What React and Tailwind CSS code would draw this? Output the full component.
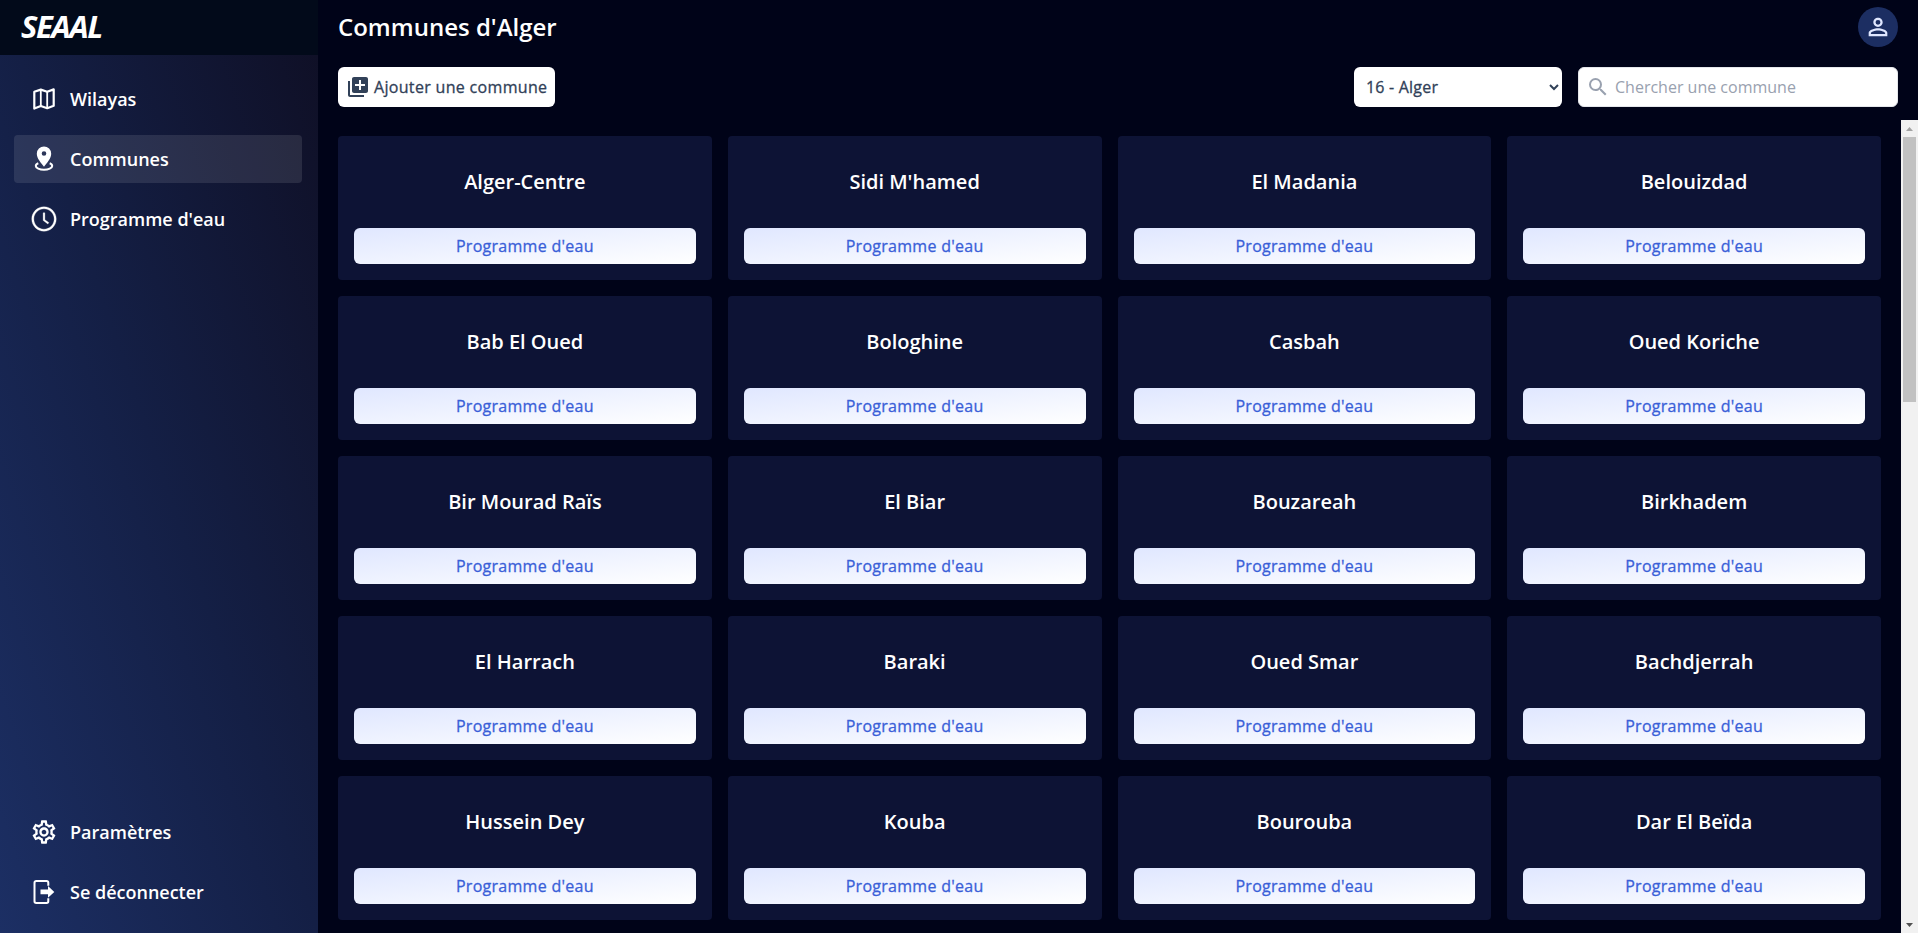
import React from 'react';
import { MdLibraryAdd, MdSearch, MdPersonOutline, MdOutlineSettings } from 'react-icons/md';
import { AiOutlineClockCircle } from 'react-icons/ai';

const communes = [
  'Alger-Centre', "Sidi M'hamed", 'El Madania', 'Belouizdad',
  'Bab El Oued', 'Bologhine', 'Casbah', 'Oued Koriche',
  'Bir Mourad Raïs', 'El Biar', 'Bouzareah', 'Birkhadem',
  'El Harrach', 'Baraki', 'Oued Smar', 'Bachdjerrah',
  'Hussein Dey', 'Kouba', 'Bourouba', 'Dar El Beïda',
];

function MapIcon() {
  return (
    <svg width="28" height="28" viewBox="0 0 28 28" fill="none" stroke="currentColor" strokeLinejoin="round">
      <path strokeWidth="2.2" d="M4.3 6.800 10.800 4.600 17.200 6.800 23.700 4.400V20.800L17.200 23.200 10.800 21 4.300 23.500Z" />
      <path strokeWidth="1.8" d="M10.800 4.600V21M17.200 6.800V23.200" />
    </svg>
  );
}

function PinIcon() {
  return (
    <svg width="28" height="28" viewBox="0 0 28 28" fill="none">
      <path fill="currentColor" fillRule="evenodd" d="M14 1.500a7.200 7.200 0 0 0-7.200 7.200c0 4.600 4.300 9.300 7.200 13 2.900-3.700 7.200-8.400 7.200-13A7.200 7.200 0 0 0 14 1.500Zm0 4.700a2.300 2.300 0 1 1 0 4.600 2.300 2.300 0 0 1 0-4.600Z" />
      <path stroke="currentColor" strokeWidth="2" d="M8.300 18.300C6.700 18.900 5.800 19.900 5.800 21c0 2 3.700 3.700 8.200 3.700s8.200-1.700 8.200-3.700c0-1.100-.9-2.100-2.500-2.700" />
    </svg>
  );
}

function LogoutIcon() {
  return (
    <svg width="28" height="28" viewBox="0 0 28 28" fill="none">
      <path stroke="currentColor" strokeWidth="2" d="M18.300 7.700V4.700a1.700 1.700 0 0 0-1.700-1.700H6.200A1.700 1.700 0 0 0 4.500 4.700v18.600A1.700 1.700 0 0 0 6.200 25h10.400a1.700 1.700 0 0 0 1.700-1.700v-3" />
      <path fill="currentColor" d="M10.500 11.500h7.500V8l6.300 5.900-6.300 5.900v-3.500h-7.500z" />
    </svg>
  );
}

function NavItem({ icon, label, active }) {
  return (
    <a className={`flex h-12 items-center gap-3 rounded px-4 text-lg font-semibold text-white ${active ? 'bg-white/10' : ''}`}>
      {icon}
      <span>{label}</span>
    </a>
  );
}

function CommuneCard({ name }) {
  return (
    <div className="flex h-36 flex-col justify-between rounded bg-[#0d1335] p-4">
      <h2 className="mt-4 text-center text-xl font-semibold text-white">{name}</h2>
      <button className="h-9 w-full rounded-md bg-gradient-to-br from-indigo-100 to-white font-medium tracking-[0.28px] text-[#3a5fd8] [-webkit-text-stroke:0.3px]">
        Programme d'eau
      </button>
    </div>
  );
}

function ScrollBar() {
  return (
    <div className="flex w-[17px] shrink-0 flex-col items-center bg-[#f1f1f1]">
      <svg width="17" height="17" viewBox="0 0 17 17"><path fill="#a3a3a3" d="M5 11h7L8.500 7z" /></svg>
      <div className="h-[265px] w-[13px] bg-[#c1c1c1]" />
      <svg className="mt-auto" width="17" height="17" viewBox="0 0 17 17"><path fill="#505050" d="M5 7h7l-3.500 4z" /></svg>
    </div>
  );
}

export default function App() {
  return (
    <div className="flex h-[933px] w-full overflow-hidden bg-[#000318] font-['Open_Sans',sans-serif]">
      <aside className="flex w-[318px] shrink-0 flex-col bg-linear-to-tr/srgb from-[#1c2f64] via-[#141f45] to-[#0f0f25]">
        <div className="flex h-[55px] items-center bg-[#020a1a] pl-[21px]">
          <span className="-mt-0.5 text-[31px] font-bold italic tracking-[-1.5px] text-white">SEAAL</span>
        </div>
        <nav className="flex flex-1 flex-col gap-3 pt-5 pr-4 pb-[17px] pl-3.5">
          <NavItem icon={<MapIcon />} label="Wilayas" />
          <NavItem icon={<PinIcon />} label="Communes" active />
          <NavItem icon={<AiOutlineClockCircle size={28} strokeWidth={10} />} label="Programme d'eau" />
          <div className="flex-1" />
          <NavItem icon={<MdOutlineSettings size={28} />} label="Paramètres" />
          <NavItem icon={<LogoutIcon />} label="Se déconnecter" />
        </nav>
      </aside>

      <main className="flex min-w-0 flex-1 flex-col">
        <header className="flex h-[55px] items-center justify-between px-5 pb-px">
          <h1 className="text-2xl font-semibold text-white">Communes d'Alger</h1>
          <div className="flex size-10 items-center justify-center rounded-full bg-[#1c2e62] text-indigo-100">
            <MdPersonOutline size={28} />
          </div>
        </header>

        <div className="flex h-[65px] gap-4 px-5 pt-3">
          <button className="mr-auto flex h-10 w-[217px] items-center gap-1 whitespace-nowrap rounded-md bg-white px-2 font-medium tracking-[0.32px] text-slate-700 [-webkit-text-stroke:0.3px]">
            <MdLibraryAdd size={24} className="shrink-0" />
            Ajouter une commune
          </button>
          <select className="h-10 w-[208px] rounded-md bg-white px-2 font-medium tracking-[0.2px] text-slate-700 [-webkit-text-stroke:0.3px]">
            <option>16 - Alger</option>
          </select>
          <label className="flex h-10 w-80 items-center gap-1 rounded-md border border-gray-200 bg-white px-[7px] text-gray-400">
            <MdSearch size={24} />
            <input className="min-w-0 flex-1 pl-px outline-none placeholder:text-gray-400" placeholder="Chercher une commune" />
          </label>
        </div>

        <div className="flex min-h-0 flex-1">
          <div className="grid flex-1 auto-rows-min grid-cols-4 gap-4 overflow-hidden px-5 py-4">
            {communes.map((name) => (
              <CommuneCard key={name} name={name} />
            ))}
          </div>
          <ScrollBar />
        </div>
      </main>
    </div>
  );
}
